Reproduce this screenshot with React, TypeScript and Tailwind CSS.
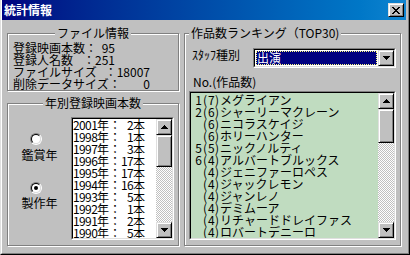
import React from 'react';

const years = [
  ['2001', '2'],
  ['1998', '1'],
  ['1997', '3'],
  ['1996', '17'],
  ['1995', '17'],
  ['1994', '16'],
  ['1993', '5'],
  ['1992', '1'],
  ['1991', '2'],
  ['1990', '5'],
  ['1989', '4'],
];

const ranking = [
  ['1', '7', 'メグライアン'],
  ['2', '6', 'シャーリーマクレーン'],
  ['', '6', 'ニコラスケイジ'],
  ['', '6', 'ホリーハンター'],
  ['5', '5', 'ニックノルティ'],
  ['6', '4', 'アルバートブルックス'],
  ['', '4', 'ジェニファーロペス'],
  ['', '4', 'ジャックレモン'],
  ['', '4', 'ジャンレノ'],
  ['', '4', 'デミムーア'],
  ['', '4', 'リチャードドレイファス'],
  ['', '4', 'ロバートデニーロ'],
  ['13', '3', 'アンソニーホプキンス'],
];

function Raised({ className = '', children }: { className?: string; children?: React.ReactNode }) {
  return (
    <div
      className={`shrink-0 bg-[#c0c0c0] border border-t-[#dfdfdf] border-l-[#dfdfdf] border-r-black border-b-black shadow-[inset_1px_1px_0_#fff,inset_-1px_-1px_0_#808080] flex items-center justify-center ${className}`}
    >
      {children}
    </div>
  );
}

function Sunken({ className = '', inner = '', children }: { className?: string; inner?: string; children?: React.ReactNode }) {
  return (
    <div className={`border border-t-[#808080] border-l-[#808080] border-r-white border-b-white ${className}`}>
      <div className={`w-full h-full flex overflow-hidden border border-t-black border-l-black border-r-[#dfdfdf] border-b-[#dfdfdf] ${inner}`}>
        {children}
      </div>
    </div>
  );
}

function UpArrow() {
  return (
    <svg width="7" height="4" viewBox="0 0 7 4" shapeRendering="crispEdges">
      <path d="M3 0h1v1h1v1h1v1h1v1H0V3h1V2h1V1h1z" fill="#000" />
    </svg>
  );
}

function DownArrow() {
  return (
    <svg width="7" height="4" viewBox="0 0 7 4" shapeRendering="crispEdges">
      <path d="M0 0h7v1h-1v1h-1v1h-1v1h-1v-1h-1v-1h-1v-1h-1z" fill="#000" />
    </svg>
  );
}

function ScrollBar({ thumb }: { thumb: string }) {
  return (
    <div className="w-[16px] h-full flex flex-col shrink-0">
      <Raised className="h-[16px] w-[16px]">
        <UpArrow />
      </Raised>
      <Raised className={`w-[16px] ${thumb}`} />
      <div className="flex-1 bg-[image:repeating-conic-gradient(#c0c0c0_0%_25%,#ffffff_0%_50%)] bg-[length:2px_2px]" />
      <Raised className="h-[16px] w-[16px]">
        <DownArrow />
      </Raised>
    </div>
  );
}

function GroupBox({ title, center, className = '', children }: { title: string; center?: boolean; className?: string; children?: React.ReactNode }) {
  return (
    <div className={`relative border border-[#808080] shadow-[inset_1px_1px_0_#fff,1px_1px_0_#fff] ${className}`}>
      <span
        className={`absolute top-[-7px] bg-[#c0c0c0] px-[2px] leading-[12px] whitespace-nowrap ${center ? 'left-1/2 -translate-x-1/2' : 'left-[4px]'}`}
      >
        {title}
      </span>
      {children}
    </div>
  );
}

function Radio({ checked }: { checked?: boolean }) {
  return (
    <div className="w-[12px] h-[12px] rounded-full border border-t-[#808080] border-l-[#808080] border-r-white border-b-white">
      <div className="w-full h-full rounded-full border border-t-black border-l-black border-r-[#dfdfdf] border-b-[#dfdfdf] bg-white flex items-center justify-center">
        {checked && <div className="w-[4px] h-[4px] rounded-full bg-black" />}
      </div>
    </div>
  );
}

export default function App() {
  return (
    <div className="w-[410px] h-[255px] bg-[#c0c0c0] border-l border-l-[#dfdfdf] border-r border-r-black border-b border-b-black font-['Noto_Sans_CJK_JP',sans-serif] text-[12px] leading-[12px] text-black">
      <div className="h-full flex flex-col border-l border-l-white border-r border-r-[#808080] border-b border-b-[#808080] pr-[2px]">
        {/* title bar */}
        <div className="h-[20px] flex items-center pl-[2px] bg-linear-to-r from-[#000080] to-[#1084d0]">
          <span className="font-bold text-white">統計情報</span>
          <Raised className="ml-auto mr-[2px] w-[16px] h-[14px]">
            <svg width="8" height="7" viewBox="0 0 8 7" shapeRendering="crispEdges">
              <path d="M0 0h2v1h1v1h2V1h1V0h2v1H7v1H6v1H5v1h1v1h1v1h1v1H6V6H5V5H3v1H2v1H0V6h1V5h1V4h1V3H2V2H1V1H0z" fill="#000" />
            </svg>
          </Raised>
        </div>

        <div className="flex pt-[13px] pl-[5px]">
          {/* left column */}
          <div className="w-[172px] flex flex-col">
            <GroupBox title="ファイル情報" center className="h-[58px]">
              <div className="pt-[8px] pl-[5px] flex flex-col whitespace-nowrap">
                <div className="flex w-[102px]">
                  <span className="w-[72px]">登録映画本数</span>
                  <span className="w-[12px]">：</span>
                  <span className="flex-1 text-right">95</span>
                </div>
                <div className="flex w-[102px]">
                  <span className="w-[75px]">登録人名数</span>
                  <span className="w-[12px]">：</span>
                  <span className="flex-1 flex justify-end">251</span>
                </div>
                <div className="flex w-[137px]">
                  <span className="w-[93px]">ファイルサイズ</span>
                  <span className="w-[12px]">：</span>
                  <span className="flex-1 text-right">18007</span>
                </div>
                <div className="flex w-[137px]">
                  <span>削除データサイズ</span>
                  <span className="w-[12px]">：</span>
                  <span className="flex-1 text-right">0</span>
                </div>
              </div>
            </GroupBox>

            <GroupBox title="年別登録映画本数" center className="mt-[12px] h-[143px]">
              <div className="flex">
                <div className="w-[63px] flex flex-col items-center pt-[29px]">
                  <div className="self-start ml-[22px]">
                    <Radio />
                  </div>
                  <span className="mt-[4px]">鑑賞年</span>
                  <div className="self-start ml-[22px] mt-[21px]">
                    <Radio checked />
                  </div>
                  <span className="mt-[3px]">製作年</span>
                </div>
                <Sunken className="mt-[13px] w-[103px] h-[123px]" inner="bg-white">
                  <div className="flex-1 overflow-hidden whitespace-nowrap">
                    {years.map(([y, n]) => (
                      <div key={y} className="flex h-[12px]">
                        <span className="w-[24px] tracking-[-0.6px]">{y}</span>
                        <span className="w-[12px]">年</span>
                        <span className="w-[12px]">：</span>
                        <span className="w-[12px] flex justify-end tracking-[-0.6px]">{n}</span>
                        <span className="w-[12px]">本</span>
                      </div>
                    ))}
                  </div>
                  <ScrollBar thumb="h-[32px]" />
                </Sunken>
              </div>
            </GroupBox>
          </div>

          {/* right column */}
          <GroupBox title="作品数ランキング（TOP30)" className="ml-[5px] w-[217px] h-[213px]">
            <div className="flex flex-col">
              <div className="flex items-start pt-[14px] pl-[7px]">
                <span className="w-[61px] mt-[1px] whitespace-nowrap">ｽﾀｯﾌ種別</span>
                <Sunken className="w-[143px] h-[20px]" inner="bg-white">
                  <div className="flex-1 p-[1px]">
                    <div className="h-full bg-[#000080] border border-dotted border-[#ffff80] text-white leading-[12px]">
                      出演
                    </div>
                  </div>
                  <Raised className="w-[16px] h-[16px]">
                    <DownArrow />
                  </Raised>
                </Sunken>
              </div>
              <span className="mt-[8px] pl-[8px] whitespace-nowrap">No.(作品数)</span>
              <Sunken className="mt-[3px] ml-[4px] w-[207px] h-[149px]" inner="bg-[#c0dcc0]">
                <div className="flex-1 overflow-hidden pt-[1px] pl-[2px] whitespace-nowrap">
                  {ranking.map(([no, cnt, name], i) => (
                    <div key={i} className="flex h-[12px]">
                      <span className="w-[9px] flex justify-end">{no}</span>
                      <span className="w-[6px] text-center">(</span>
                      <span className="w-[6px] text-center">{cnt}</span>
                      <span className="w-[6px] text-center">)</span>
                      <span>{name}</span>
                    </div>
                  ))}
                </div>
                <ScrollBar thumb="h-[34px]" />
              </Sunken>
            </div>
          </GroupBox>
        </div>
      </div>
    </div>
  );
}
